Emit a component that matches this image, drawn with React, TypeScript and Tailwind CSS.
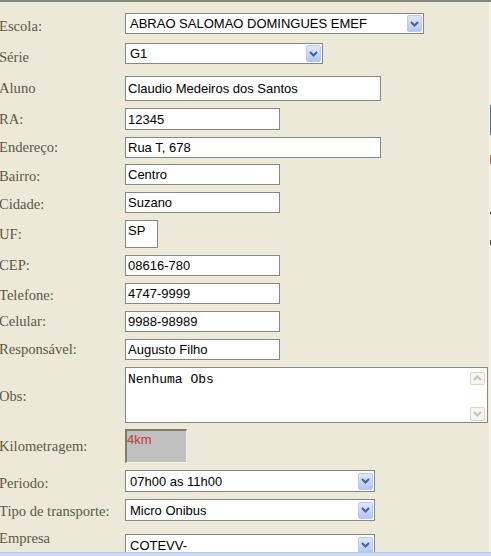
import React from 'react';

const serif = "font-['Liberation_Serif','Times_New_Roman',serif]";
const sans = "font-['Liberation_Sans',Arial,sans-serif]";

const labelCls = `-ml-px w-[126px] shrink-0 whitespace-nowrap text-[14.6px] leading-[17px] text-[#5a5a46] ${serif}`;
const inputCls = `border border-[#868686] bg-white pl-[2px] text-[13px] leading-[15px] text-black outline-none ${sans}`;

function Chevron({ color }: { color: string }) {
  return (
    <svg width="9" height="6" viewBox="0 0 9 6">
      <path d="M1 1l3.5 3.5L8 1" fill="none" stroke={color} strokeWidth="2" />
    </svg>
  );
}

function Select({ value, className }: { value: string; className: string }) {
  return (
    <div className={`flex items-center border border-[#868686] bg-white ${className}`}>
      <span className={`flex-1 truncate pl-[4px] text-[13px] leading-[15px] text-black ${sans}`}>{value}</span>
      <span className="mr-px flex h-[17px] w-[15px] items-center justify-center rounded-[2px] border border-[#b7c8f2] bg-linear-to-b from-[#dfe8fd] to-[#b2c6f5]">
        <Chevron color="#4d6185" />
      </span>
    </div>
  );
}

function Field({ value, className }: { value: string; className: string }) {
  return <input readOnly value={value} className={`${inputCls} ${className}`} />;
}

function Row({ label, labelClass = '', className = '', children }: {
  label: string; labelClass?: string; className?: string; children: React.ReactNode;
}) {
  return (
    <div className={`flex items-center ${className}`}>
      <span className={`${labelCls} ${labelClass}`}>{label}</span>
      {children}
    </div>
  );
}

export default function App() {
  return (
    <div className="relative flex h-[556px] w-[491px] flex-col overflow-hidden bg-[#ECE9D8]">
      <div className="h-[2px] shrink-0 bg-[#85857a]" />

      <div className="flex-1 overflow-hidden pt-[11px]">
        <Row label="Escola:" labelClass="translate-y-[2.5px]">
          <Select value="ABRAO SALOMAO DOMINGUES EMEF" className="h-[21px] w-[299px]" />
        </Row>
        <Row label="Série" labelClass="translate-y-[4px]" className="mt-[9px]">
          <Select value="G1" className="h-[21px] w-[198px]" />
        </Row>
        <Row label="Aluno" className="mt-[12px]">
          <Field value="Claudio Medeiros dos Santos" className="h-[25px] w-[256px]" />
        </Row>
        <Row label="RA:" className="mt-[7px]">
          <Field value="12345" className="h-[22px] w-[155px]" />
        </Row>
        <Row label="Endereço:" className="mt-[7px]">
          <Field value="Rua T, 678" className="h-[21px] w-[256px]" />
        </Row>
        <Row label="Bairro:" labelClass="translate-y-[1.5px]" className="mt-[6px]">
          <Field value="Centro" className="h-[21px] w-[155px]" />
        </Row>
        <Row label="Cidade:" labelClass="translate-y-[1.5px]" className="mt-[7px]">
          <Field value="Suzano" className="h-[21px] w-[155px]" />
        </Row>
        <Row label="UF:" className="mt-[7px]">
          <div className={`h-[28px] w-[33px] border border-[#868686] bg-white pl-[2px] pt-[2px] text-[13px] leading-[15px] text-black ${sans}`}>
            SP
          </div>
        </Row>
        <Row label="CEP:" className="mt-[7px]">
          <Field value="08616-780" className="h-[21px] w-[155px]" />
        </Row>
        <Row label="Telefone:" labelClass="translate-y-[1.5px]" className="mt-[7px]">
          <Field value="4747-9999" className="h-[21px] w-[155px]" />
        </Row>
        <Row label="Celular:" className="mt-[7px]">
          <Field value="9988-98989" className="h-[21px] w-[155px]" />
        </Row>
        <Row label="Responsável:" className="mt-[7px]">
          <Field value="Augusto Filho" className="h-[21px] w-[155px]" />
        </Row>
        <Row label="Obs:" labelClass="translate-y-[1px]" className="mt-[7px]">
          <div className="flex h-[56px] w-[363px] border border-[#868686] bg-white">
            <div className="flex-1 pl-[2px] pt-[4px] font-['Liberation_Mono','Courier_New',monospace] text-[13px] leading-[15px] text-black">
              Nenhuma Obs
            </div>
            <div className="flex w-[17px] flex-col justify-between pb-px pr-px pt-[4px]">
              <span className="flex h-[13px] w-[15px] rotate-180 items-center justify-center rounded-[2px] border border-[#d6d6ca] bg-[#f6f6f1]">
                <Chevron color="#c5c5b9" />
              </span>
              <span className="flex h-[14px] w-[15px] items-center justify-center rounded-[2px] border border-[#d6d6ca] bg-[#f6f6f1]">
                <Chevron color="#c5c5b9" />
              </span>
            </div>
          </div>
        </Row>
        <Row label="Kilometragem:" className="mt-[6px]">
          <div className={`h-[34px] w-[62px] border-t-2 border-l-2 border-r border-b border-t-[#7d7b6c] border-l-[#7d7b6c] border-r-[#f4f3ee] border-b-[#f4f3ee] bg-[#c0c0c0] pt-px text-[13px] leading-[15px] text-[#c23b32] ${sans}`}>
            4km
          </div>
        </Row>
        <Row label="Periodo:" labelClass="translate-y-[1.5px]" className="mt-[7px]">
          <Select value="07h00 as 11h00" className="h-[22px] w-[250px]" />
        </Row>
        <Row label="Tipo de transporte:" labelClass="translate-y-[1px]" className="mt-[7px]">
          <Select value="Micro Onibus" className="h-[22px] w-[250px]" />
        </Row>
        <div className="mt-[7px] flex items-start">
          <span className={`${labelCls} pt-px leading-[18px]`}>Empresa</span>
          <Select value="COTEVV-" className="mt-[6px] h-[22px] w-[250px]" />
        </div>
      </div>

      <div className="h-[4px] shrink-0 border-t border-[#b3c8e8] bg-[#cddcf1]" />

      {/* edge of the window behind */}
      <div className="absolute right-0 top-[2px] bottom-[4px] w-[2px] border-l border-[#f6f5ef]">
        <div className="mt-[103px] h-[30px] bg-[#3b6fdc]" />
        <div className="mt-[20px] h-[9px] bg-[#c8681c]" />
        <div className="mt-[48px] h-[2px] bg-[#333]" />
        <div className="mt-[26px] h-[5px] bg-[#444]" />
      </div>
    </div>
  );
}
